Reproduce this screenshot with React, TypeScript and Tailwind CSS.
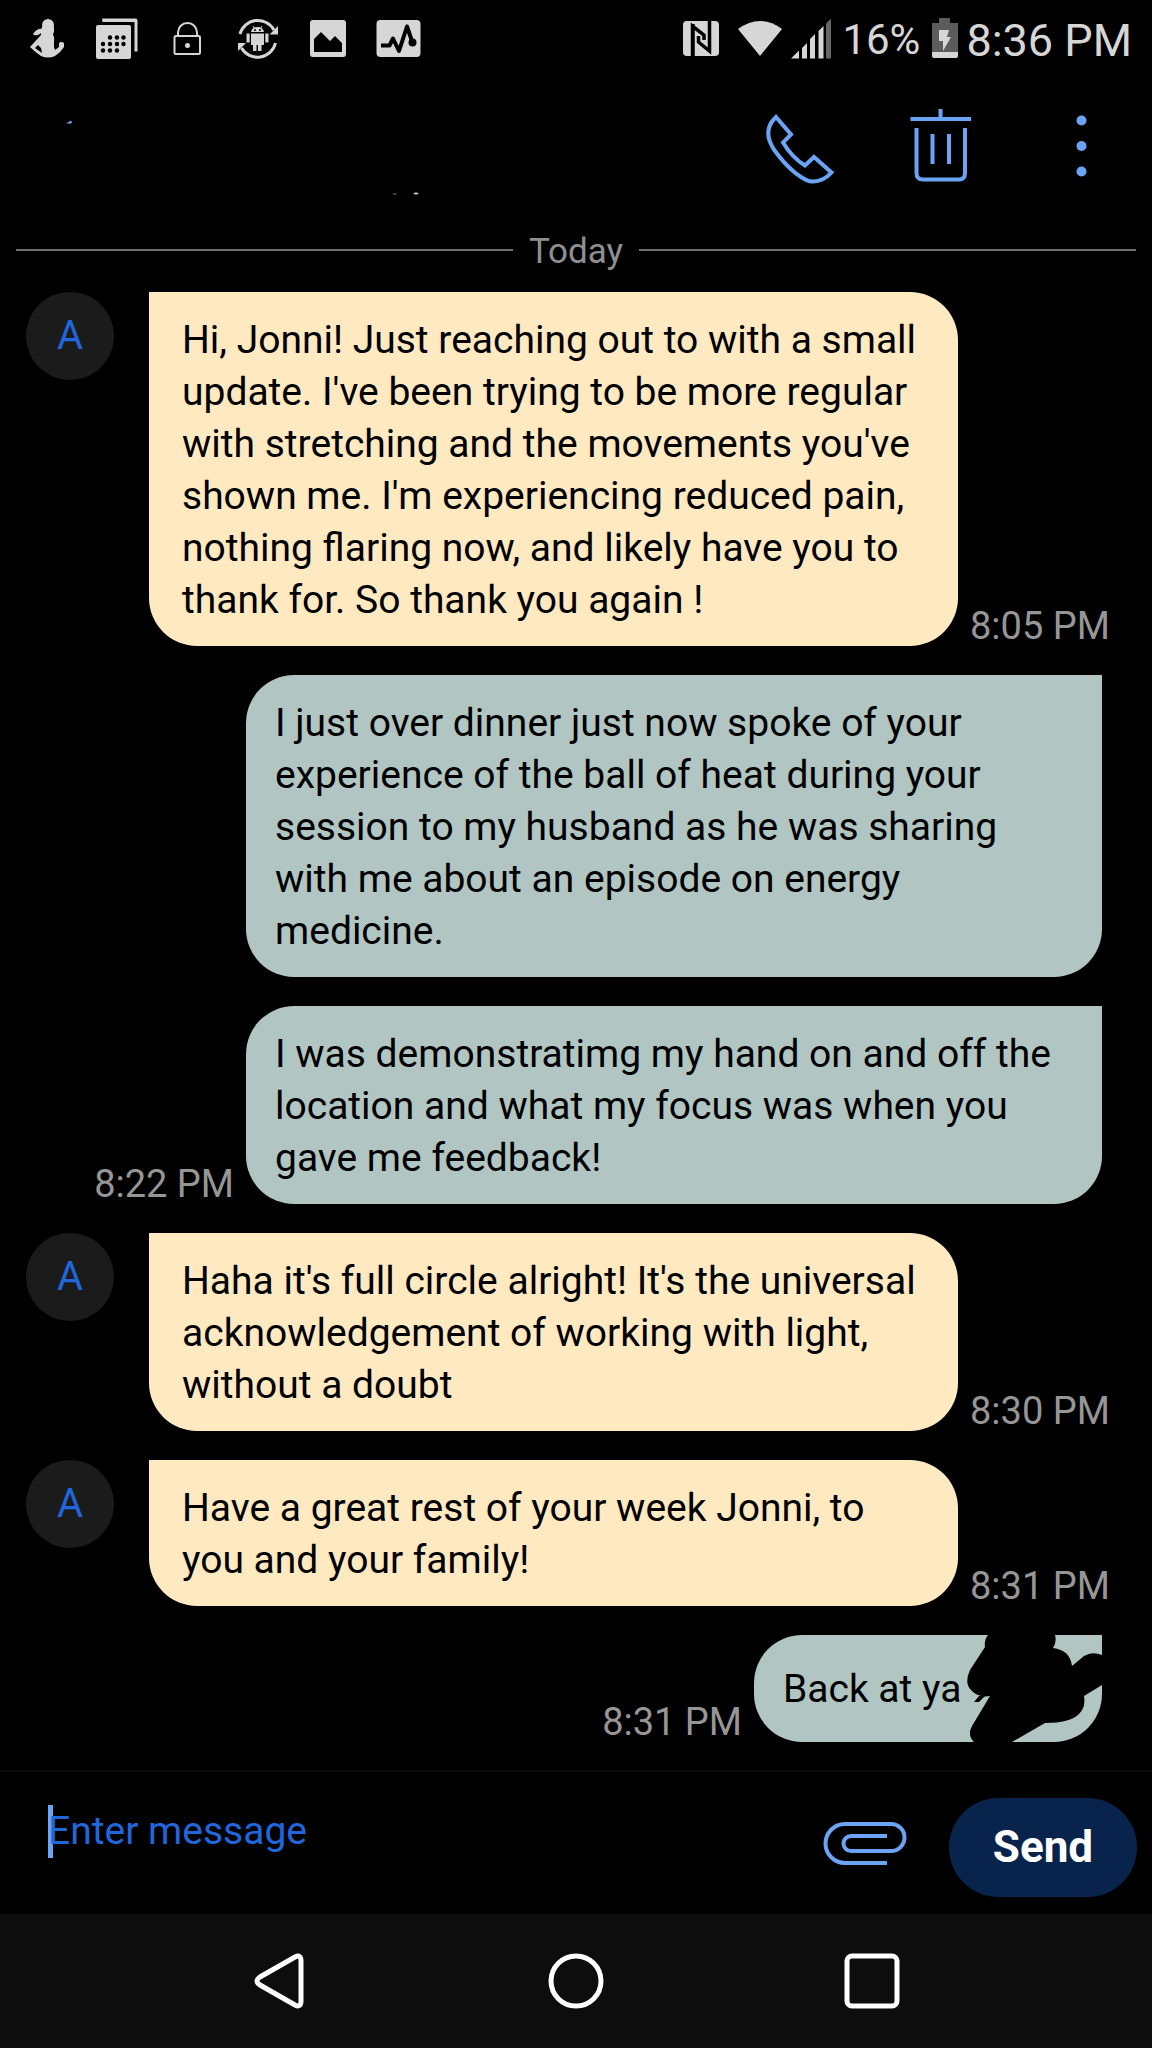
import { useState } from 'react'

interface Message {
  from: 'them' | 'me'
  text: string
  time?: string
  scribble?: boolean
}

const messages: Message[] = [
  {
    from: 'them',
    text: "Hi, Jonni! Just reaching out to with a small update. I've been trying to be more regular with stretching and the movements you've shown me. I'm experiencing reduced pain, nothing flaring now, and likely have you to thank for. So thank you again !",
    time: '8:05 PM',
  },
  {
    from: 'me',
    text: 'I just over dinner just now spoke of your experience of the ball of heat during your session to my husband as he was sharing with me about an episode on energy medicine.',
  },
  {
    from: 'me',
    text: 'I was demonstratimg my hand on and off the location and what my focus was when you gave me feedback!',
    time: '8:22 PM',
  },
  {
    from: 'them',
    text: "Haha it's full circle alright! It's the universal acknowledgement of working with light, without a doubt",
    time: '8:30 PM',
  },
  {
    from: 'them',
    text: 'Have a great rest of your week Jonni, to you and your family!',
    time: '8:31 PM',
  },
  { from: 'me', text: 'Back at ya', time: '8:31 PM', scribble: true },
]

function StatusBar() {
  return (
    <div className="flex h-20 items-center justify-between pl-7 pr-5 text-[#d6d6d6]">
      <svg className="h-12 w-[396px] shrink-0" viewBox="28 16 396 48" fill="currentColor">
        {/* fitness */}
        <circle cx="48" cy="25" r="6" />
        <path d="M42 27h12v5l-1 2q2 4 1 9l0 4 1 3 4-3 0-4q2-2 5 0v4q-3 5-9 9-7 3-14 0-6-4-11-9l11-12q-1-4 1-8zM38 45l-3 3 7 5-1-5z" />
        <path d="M33 34q4-6 10-5l-2 4q-3 3-7 2z" />
        {/* calendar */}
        <path d="M102 18.500h33.500q2 0 2 2v31h-3V22h-32z" />
        <rect x="96" y="25" width="35" height="34" rx="2" />
        <g fill="#000">
          {[110, 117, 123.5].map((x) => <circle key={x} cx={x} cy="37.500" r="2.200" />)}
          {[103, 110, 117, 123.5].map((x) => <circle key={x} cx={x} cy="44" r="2.200" />)}
          {[103, 110, 117].map((x) => <circle key={x} cx={x} cy="50.500" r="2.200" />)}
        </g>
        {/* lock */}
        <g fill="none" stroke="currentColor" strokeWidth="2">
          <rect x="174.500" y="36" width="25.500" height="18" rx="1.500" />
          <path d="M178 36v-3.500a9.500 9.500 0 0 1 19 0V36" />
        </g>
        <circle cx="187.500" cy="45.500" r="2.500" />
        {/* android sync */}
        <g fill="none" stroke="currentColor" strokeWidth="3">
          <path d="M240 34a18.500 18.500 0 0 1 34-4" />
          <path d="M275.500 43a18.500 18.500 0 0 1-34 5" />
        </g>
        <path d="M278 26v8.500h-8.500zM238 51v-8h8z" />
        <path d="M251 32q1-5 6.500-5T264 32zM251 33.500h13V45h-2.500v6h-3.500v-6h-1.500v6H253v-6h-2zM246.500 33.500h3.200v9h-3.200zM265.300 33.500h3.200v9h-3.200z" />
        <path d="M253 26l2 3M262 26l-2 3" stroke="currentColor" />
        <circle cx="255" cy="30" r="1" fill="#000" />
        <circle cx="260" cy="30" r="1" fill="#000" />
        {/* picture */}
        <rect x="310" y="20" width="36" height="37" rx="3" />
        <path d="M314 52V39l7-7 9 9 5-5 7 7v9z" fill="#000" />
        {/* activity */}
        <rect x="376.500" y="20" width="44" height="37" rx="4" />
        <path
          d="M381 45.500h8.500l3.500-7 6 12.500 8-24.500 5.500 16"
          fill="none"
          stroke="#000"
          strokeWidth="4"
          strokeLinejoin="round"
        />
        <circle cx="412.500" cy="42.500" r="4" fill="#000" />
      </svg>

      <div className="flex items-center">
        <svg className="h-12 w-[150px] shrink-0" viewBox="682 16 150 48" fill="currentColor">
          {/* nfc */}
          <rect x="683" y="21" width="36" height="35" rx="4" />
          <path
            d="M692.500 57V26l11.500 9v5M693 56V24M709.500 20v31l-11-9v-6"
            fill="none"
            stroke="#000"
            strokeWidth="3.500"
          />
          {/* wifi */}
          <path d="M738 29q22-16 44 0l-22 27z" />
          {/* signal */}
          <path d="M791 58.500l8-8v8zM802 48l5-5v15.500h-5zM810 39l5-5v24.500h-5zM818.500 31l5-5v32.500h-5z" />
          <path d="M826 23.500l5-5v40h-5z" fill="#666" />
        </svg>
        <span className="ml-2.5 text-[42px] leading-none">16%</span>
        <svg className="ml-3 mr-2 h-12 w-[26px] shrink-0" viewBox="932 16 26 48">
          <path d="M939 18h11v5h8v29h-26V23h7z" fill="#5c5c5c" />
          <path d="M932 52h26v4q0 2-2 2h-22q-2 0-2-2z" fill="#d6d6d6" />
          <path d="M939 30h10l-2 7h4l-8 14v-10h-4z" fill="#d6d6d6" />
        </svg>
        <span className="text-[45px] leading-none">8:36 PM</span>
      </div>
    </div>
  )
}

function Header() {
  return (
    <header className="flex h-[146px] items-start justify-between pl-16 pr-16 pt-7 text-[#6ba4f5]">
      <div className="flex h-24 items-start">
        <button aria-label="Back" className="h-24 w-10">
          <svg className="h-24 w-10" viewBox="64 108 40 96" fill="currentColor">
            <path d="M66 123.500l5-3 1 2-1 1z" />
          </svg>
        </button>
        <svg className="h-24 w-[330px]" viewBox="104 108 330 96" fill="#ccc">
          <ellipse cx="416" cy="193.500" rx="2.500" ry="1" />
          <ellipse cx="394.500" cy="194" rx="2" ry="1" fill="#444" />
        </svg>
      </div>
      <div className="flex gap-[74px]">
        <button aria-label="Call">
          <svg className="h-20 w-[72px]" viewBox="764 107 72 80" fill="none" stroke="currentColor" strokeWidth="4">
            <path d="M776 116l15 17.500-8 8q9 15 22 23l9-8.500 17.500 15.500q-10 11-23 8.500Q792 173 775 150q-14-20 1-34z" />
          </svg>
        </button>
        <button aria-label="Delete">
          <svg className="h-20 w-[62px]" viewBox="910 108 62 80" fill="none" stroke="currentColor" strokeWidth="4">
            <path d="M910.500 119H971M940.500 109v10M916.500 128v45q0 6.500 6.500 6.500h36q6 0 6-6.500v-45M932.500 134v30M949 134v30" />
          </svg>
        </button>
        <button aria-label="More options">
          <svg className="h-20 w-[42px]" viewBox="1046 108 42 80" fill="currentColor">
            <circle cx="1081.500" cy="120.500" r="5" />
            <circle cx="1081.500" cy="146" r="5" />
            <circle cx="1081.500" cy="171.500" r="5" />
          </svg>
        </button>
      </div>
    </header>
  )
}

function Time({ value }: { value?: string }) {
  return <time className="shrink-0 whitespace-nowrap text-[38px] leading-10 text-[#969696]">{value}</time>
}

function Bubble({ message }: { message: Message }) {
  if (message.from === 'them') {
    return (
      <li className="flex">
        <div className="ml-[26px] mr-[35px] flex size-22 shrink-0 items-center justify-center rounded-full bg-[#1b1b1b] text-[40px] text-[#2067dd]">
          A
        </div>
        <p className="flex-1 rounded-[48px] rounded-tl-none bg-[#fee9c0] pb-5 pl-[33px] pr-6 pt-[22px] text-black">
          {message.text}
        </p>
        <div className="flex w-[194px] shrink-0 items-end pl-3">
          <Time value={message.time} />
        </div>
      </li>
    )
  }

  return (
    <li className="flex items-end justify-end gap-3 pl-[90px] pr-[50px]">
      <Time value={message.time} />
      {message.scribble ? (
        <div className="relative flex min-h-[107px] w-[348px] items-center rounded-[48px] rounded-tr-none bg-[#b1c5c2] px-[29px] text-black">
          {message.text}
          <svg className="absolute inset-0 size-full" viewBox="754 1636 348 107">
            <path d="M988 1636q-4 5-3 12L970 1671q-6 13 1 20 7 8 19 6l-18 30q-5 9 2 16h38l33-19q25 0 34-9 7-7 5-18l18-11v-30q-10-4-18 1l-12 10q-2-16-19-18 4-6 2-13z" />
            <path d="M974 1703l5-6h6l-6 6z" />
          </svg>
        </div>
      ) : (
        <p className="w-[856px] rounded-[48px] rounded-tr-none bg-[#b1c5c2] px-[29px] pb-5 pt-[22px] text-black">
          {message.text}
        </p>
      )}
    </li>
  )
}

function Composer() {
  const [draft, setDraft] = useState('')

  return (
    <form
      className="flex h-36 items-center border-t-2 border-[#0c0c0c] pl-12 pr-[15px] pt-2"
      onSubmit={(e) => e.preventDefault()}
    >
      <div className="relative flex-1 pb-8">
        <span className="absolute left-0 top-0 h-[53px] w-[5px] bg-[#6ba4f5]" />
        <input
          aria-label="Enter message"
          placeholder="Enter message"
          value={draft}
          onChange={(e) => setDraft(e.target.value)}
          className="relative h-[53px] w-full bg-transparent text-[39px] text-[#2067dd] outline-none placeholder:text-[#2067dd]"
        />
      </div>
      <button type="button" aria-label="Attach" className="mb-2 mr-[42px] text-[#6ba4f5]">
        <svg className="h-11 w-21" viewBox="823 1820 84 44" fill="none" stroke="currentColor" strokeWidth="4">
          <path d="M887 1862h-42a19.500 19.500 0 0 1 0-39h46a13.500 13.500 0 0 1 0 27h-40a7.500 7.500 0 0 1 0-15h36" />
        </svg>
      </button>
      <button type="submit" className="h-[99px] w-[188px] rounded-full bg-[#08234c] text-[44px] font-bold text-white">
        Send
      </button>
    </form>
  )
}

function NavBar() {
  return (
    <nav className="flex h-[134px] items-center justify-center gap-60 bg-[#0d0d0d]">
      <button aria-label="Back">
        <svg className="size-14" viewBox="0 0 56 56" fill="none" stroke="#fff" strokeWidth="5">
          <path d="M43 4q6-3 6 4v40q0 7-6 4L8 32q-6-4 0-8z" />
        </svg>
      </button>
      <button aria-label="Home">
        <svg className="size-14" viewBox="0 0 56 56" fill="none" stroke="#fff" strokeWidth="5">
          <circle cx="28" cy="28" r="25" />
        </svg>
      </button>
      <button aria-label="Recent apps">
        <svg className="size-14" viewBox="0 0 56 56" fill="none" stroke="#fff" strokeWidth="5">
          <rect x="3" y="3" width="50" height="50" rx="5" />
        </svg>
      </button>
    </nav>
  )
}

export default function App() {
  return (
    <div className="flex min-h-screen flex-col bg-black font-[Roboto,sans-serif] text-[39px] leading-[52px]">
      <StatusBar />
      <Header />
      <main className="flex-1">
        <div className="flex h-[66px] items-start gap-4 px-4 text-[35px] text-[#8f8f8f]">
          <hr className="mt-[23px] flex-1 border-t-2 border-[#707070]" />
          <h2 className="leading-[52px]">Today</h2>
          <hr className="mt-[23px] flex-1 border-t-2 border-[#707070]" />
        </div>
        <ul className="flex flex-col gap-[29px]">
          {messages.map((message, index) => (
            <Bubble key={index} message={message} />
          ))}
        </ul>
      </main>
      <Composer />
      <NavBar />
    </div>
  )
}
